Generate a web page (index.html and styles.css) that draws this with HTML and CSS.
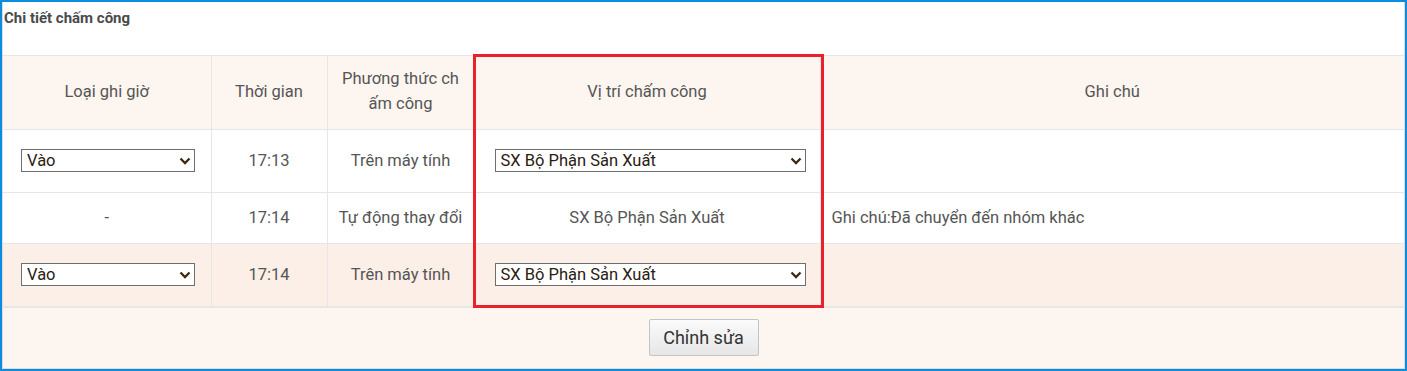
FILE: index.html
```html
<!DOCTYPE html>
<html lang="vi">
<head>
<meta charset="utf-8">
<title>Chi tiết chấm công</title>
<link rel="stylesheet" href="styles.css">
</head>
<body>
<div class="frame">
  <div class="inner">
    <div class="title">Chi tiết chấm công</div>
    <table class="grid">
      <colgroup>
        <col class="c1"><col class="c2"><col class="c3"><col class="c4"><col class="c5">
      </colgroup>
      <thead>
        <tr class="head">
          <th>Loại ghi giờ</th>
          <th>Thời gian</th>
          <th>Phương thức ch<br>ấm công</th>
          <th>Vị trí chấm công</th>
          <th>Ghi chú</th>
        </tr>
      </thead>
      <tbody>
        <tr class="row tall">
          <td class="cell-sel"><span class="selwrap sw-type"><select class="sel"><option>Vào</option><option>Ra</option></select><svg class="chev" viewBox="0 0 12 8" width="12" height="8"><path d="M1.5 1.5 L6 6 L10.5 1.5" fill="none" stroke="#3b2a14" stroke-width="2.3"/></svg></span></td>
          <td>17:13</td>
          <td>Trên máy tính</td>
          <td class="cell-sel"><span class="selwrap sw-pos"><select class="sel"><option>SX Bộ Phận Sản Xuất</option></select><svg class="chev" viewBox="0 0 12 8" width="12" height="8"><path d="M1.5 1.5 L6 6 L10.5 1.5" fill="none" stroke="#3b2a14" stroke-width="2.3"/></svg></span></td>
          <td></td>
        </tr>
        <tr class="row">
          <td>-</td>
          <td>17:14</td>
          <td>Tự động thay đổi</td>
          <td>SX Bộ Phận Sản Xuất</td>
          <td class="note">Ghi chú:Đã chuyển đến nhóm khác</td>
        </tr>
        <tr class="row tall alt">
          <td class="cell-sel"><span class="selwrap sw-type"><select class="sel"><option>Vào</option><option>Ra</option></select><svg class="chev" viewBox="0 0 12 8" width="12" height="8"><path d="M1.5 1.5 L6 6 L10.5 1.5" fill="none" stroke="#3b2a14" stroke-width="2.3"/></svg></span></td>
          <td>17:14</td>
          <td>Trên máy tính</td>
          <td class="cell-sel"><span class="selwrap sw-pos"><select class="sel"><option>SX Bộ Phận Sản Xuất</option></select><svg class="chev" viewBox="0 0 12 8" width="12" height="8"><path d="M1.5 1.5 L6 6 L10.5 1.5" fill="none" stroke="#3b2a14" stroke-width="2.3"/></svg></span></td>
          <td></td>
        </tr>
      </tbody>
    </table>
    <div class="footer">
      <button class="btn" type="button">Chỉnh sửa</button>
    </div>
  </div>
  <div class="highlight"></div>
</div>
</body>
</html>
```

FILE: styles.css
```css
html, body {
  margin: 0;
  padding: 0;
  background: #ffffff;
}

body {
  font-family: Roboto, "Noto Sans", Arial, sans-serif;
  color: #555555;
}

.frame {
  position: relative;
  width: 1407px;
  height: 371px;
  box-sizing: border-box;
  border: 2px solid #0a8ce0;
  background: #ffffff;
}

.inner {
  height: 100%;
  box-sizing: border-box;
  border: 1px solid #dcdcdc;
  border-top: none;
  display: flex;
  flex-direction: column;
}

.title {
  height: 53px;
  box-sizing: border-box;
  padding: 7px 0 0 1px;
  font-size: 15px;
  font-weight: bold;
  line-height: 18px;
  color: #4a4a4a;
}

.grid {
  width: 1401px;
  border-collapse: collapse;
  table-layout: fixed;
  font-size: 16.5px;
}

.c1 { width: 208px; }
.c2 { width: 116px; }
.c3 { width: 147px; }
.c4 { width: 346px; }
.c5 { width: 584px; }

.grid th,
.grid td {
  border: 1px solid #e6e6e6;
  text-align: center;
  vertical-align: middle;
  font-weight: normal;
  padding: 0 6px 2px;
  line-height: 25px;
  color: #555555;
  white-space: nowrap;
}

.grid th { padding-bottom: 3px; }

.grid tr > :first-child { border-left: none; }
.grid tr > :last-child { border-right: none; }

.head {
  background: #fdf5ef;
  height: 74px;
}

.row {
  background: #ffffff;
  height: 51px;
}

.row.tall { height: 63px; }

.row.alt { background: #fcefe7; }

.grid td.note {
  text-align: left;
  padding-left: 11px;
}

.grid td.cell-sel {
  text-align: left;
  padding: 0 0 1px;
}

.selwrap {
  position: relative;
  display: block;
  height: 23px;
}

.sw-type { width: 174px; margin-left: 18px; }
.sw-pos { width: 311px; margin-left: 20px; }

.sel {
  display: block;
  width: 100%;
  height: 23px;
  box-sizing: border-box;
  border: 1px solid #6e6e6e;
  border-radius: 0;
  background: #ffffff;
  font-family: Roboto, "Noto Sans", Arial, sans-serif;
  font-size: 16.5px;
  line-height: 21px;
  color: #2a2012;
  padding: 0 0 0 5px;
  appearance: none;
  -webkit-appearance: none;
  outline: none;
}

.chev {
  position: absolute;
  right: 4px;
  top: 8px;
  pointer-events: none;
}

.footer {
  flex: 1;
  background: #fdf5ef;
  border-top: 1px solid #e6e6e6;
  display: flex;
  justify-content: center;
  align-items: flex-start;
  padding-top: 11px;
}

.btn {
  width: 110px;
  height: 37px;
  border: 1px solid #c4c4c4;
  border-radius: 2px;
  background: linear-gradient(#fbfbfb, #e6e6e6);
  font-family: Roboto, "Noto Sans", Arial, sans-serif;
  font-size: 18px;
  color: #333333;
  padding: 0;
}

.highlight {
  position: absolute;
  left: 471px;
  top: 52px;
  width: 351px;
  height: 254px;
  box-sizing: border-box;
  border: 3px solid #e8212a;
  pointer-events: none;
}
```
